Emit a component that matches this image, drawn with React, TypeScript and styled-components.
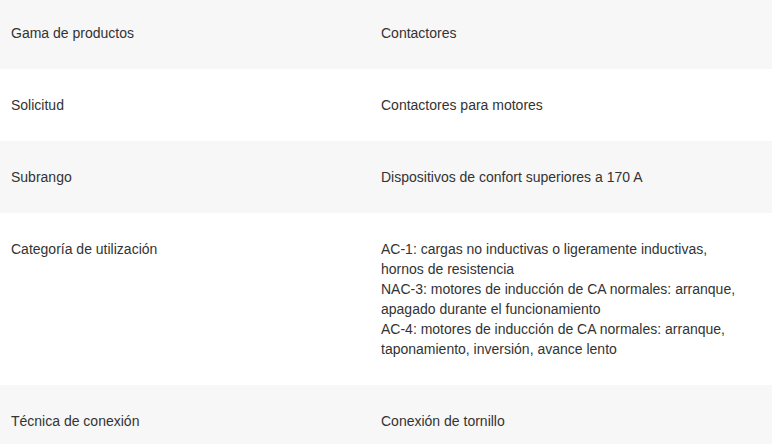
import styled, { createGlobalStyle } from "styled-components";

const GlobalStyle = createGlobalStyle`
  html, body {
    margin: 0;
    padding: 0;
    background: #ffffff;
  }
  body {
    font-family: "Liberation Sans", Arial, sans-serif;
    color: #333333;
  }
`;

const Tabla = styled.div`
  width: 772px;
  margin-top: -3px;
`;

const Fila = styled.div<{ $gris: boolean }>`
  display: grid;
  grid-template-columns: 370px 1fr;
  background: ${(p) => (p.$gris ? "#f7f7f7" : "#ffffff")};
`;

const Celda = styled.div`
  padding: 26px 31px 26px 11px;
  font-size: 14px;
  line-height: 20px;
`;

const Linea = styled.div``;

const datos: { nombre: string; valor: string[] }[] = [
  { nombre: "Gama de productos", valor: ["Contactores"] },
  { nombre: "Solicitud", valor: ["Contactores para motores"] },
  { nombre: "Subrango", valor: ["Dispositivos de confort superiores a 170 A"] },
  {
    nombre: "Categoría de utilización",
    valor: [
      "AC-1: cargas no inductivas o ligeramente inductivas, hornos de resistencia",
      "NAC-3: motores de inducción de CA normales: arranque, apagado durante el funcionamiento",
      "AC-4: motores de inducción de CA normales: arranque, taponamiento, inversión, avance lento",
    ],
  },
  { nombre: "Técnica de conexión", valor: ["Conexión de tornillo"] },
];

const App = () => (
  <>
    <GlobalStyle />
    <Tabla>
      {datos.map((d, i) => (
        <Fila key={d.nombre} $gris={i % 2 === 0}>
          <Celda>{d.nombre}</Celda>
          <Celda>
            {d.valor.map((v) => (
              <Linea key={v}>{v}</Linea>
            ))}
          </Celda>
        </Fila>
      ))}
    </Tabla>
  </>
);

export default App;
